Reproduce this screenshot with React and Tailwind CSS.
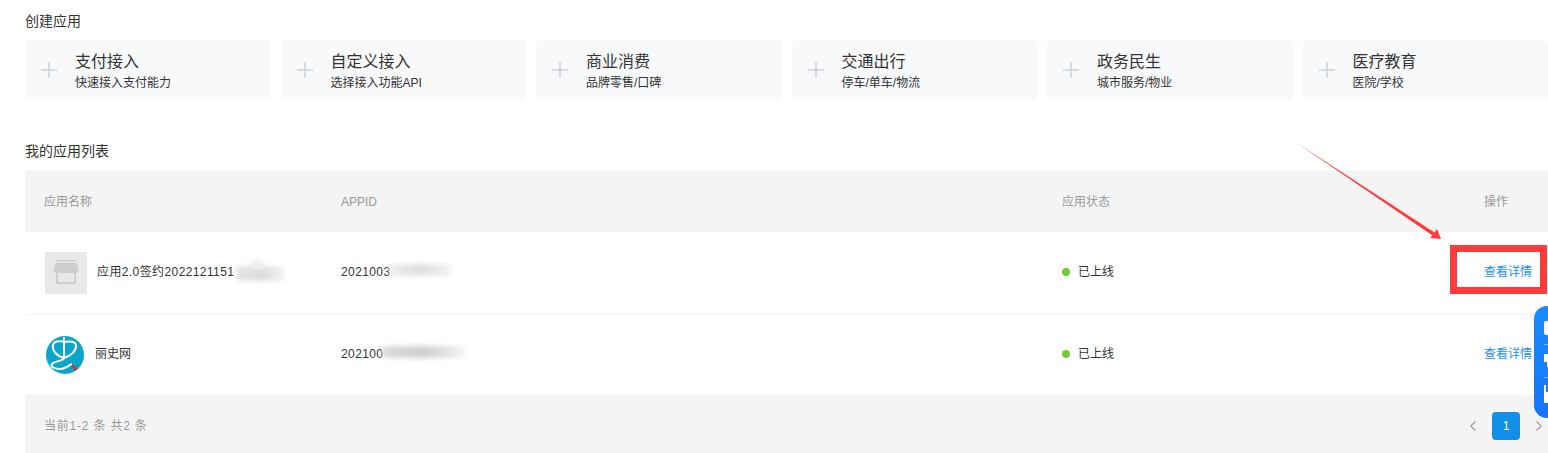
const cards = [
  { title: "支付接入", desc: "快速接入支付能力" },
  { title: "自定义接入", desc: "选择接入功能API" },
  { title: "商业消费", desc: "品牌零售/口碑" },
  { title: "交通出行", desc: "停车/单车/物流" },
  { title: "政务民生", desc: "城市服务/物业" },
  { title: "医疗教育", desc: "医院/学校" },
];

const StoreIcon = () => (
  <svg width="42" height="42" viewBox="0 0 42 42">
    <rect x="11" y="8" width="20" height="1.5" fill="#cdcdcd" />
    <path d="M11 11h20l2 4v4a2 2 0 0 1-2 2H11a2 2 0 0 1-2-2v-4z" fill="#cdcdcd" />
    <path d="M12 21v10h18V21" fill="none" stroke="#cdcdcd" strokeWidth="2" />
  </svg>
);

const LogoIcon = () => (
  <svg width="38" height="38" viewBox="0 0 38 38">
    <circle cx="19" cy="19" r="19" fill="#0aa5cb" />
    <path d="M18 22C10 20 6 14 7 9 8 5 14 5 18.5 6 24 5 30 5 30 10 30 15 25 20 18 22" fill="none" stroke="#fff" strokeWidth="2" />
    <path d="M18 1V22C18 25 8 25 6 28 4 31 9 33 14 33 19 33 23 29 26 28" fill="none" stroke="#fff" strokeWidth="2" />
    <path d="M26 28L32 33 29 34.5 25.5 30z" fill="#e0301e" />
  </svg>
);

const Smudge = ({ className }) => (
  <span className={`absolute rounded-sm blur-[2px] ${className}`} />
);

const Row = ({ icon, name, nameClass, appid, smudge, border }) => (
  <div className={`grid grid-cols-[297px_721px_422px_1fr] items-center pl-[19px] pr-[15px] ${border}`}>
    <div className="flex items-center">
      {icon}
      <span className={`pb-[2px] text-[12px] text-[#333] whitespace-nowrap ${nameClass}`}>{name}</span>
    </div>
    <div className="relative pb-[2px] text-[12px] text-[#333] tracking-[0.4px]">
      {appid}
      {smudge}
    </div>
    <div className="flex items-center gap-[8px] pb-[2px] text-[12px] text-[#333]">
      <span className="w-2 h-2 rounded-full bg-[#76c940]" />
      已上线
    </div>
    <a className="pb-[2px] text-[12px] text-[#1890ff]">查看详情</a>
  </div>
);

export default function App() {
  return (
    <div className="relative w-[1548px] h-[453px] overflow-hidden bg-white pl-[25px] font-['Liberation_Sans','Noto_Sans_CJK_SC',sans-serif]">
      <h2 className="pt-[12px] h-[40px] text-[14px] leading-[18px] font-normal text-[#333]">创建应用</h2>

      <div className="grid grid-cols-[repeat(6,245.5px)] gap-x-[10px] w-[1523px]">
        {cards.map((card) => (
          <div key={card.title} className="flex items-center h-[60px] rounded bg-[#f8f9fb] pl-[15px]">
            <svg width="18" height="18" viewBox="0 0 18 18" className="shrink-0 mr-[17px]">
              <path d="M9 1v16M1 9h16" stroke="#c6d1df" strokeWidth="1.5" />
            </svg>
            <div className="flex flex-col pt-[3px]">
              <span className="text-[16px] leading-[20px] text-[#333]">{card.title}</span>
              <span className="mt-[2px] text-[12px] leading-[18px] text-[#333]">{card.desc}</span>
            </div>
          </div>
        ))}
      </div>

      <h2 className="mt-[41px] h-[30px] text-[14px] leading-[20px] font-normal text-[#333]">我的应用列表</h2>

      <div className="w-[1523px]">
        <div className="grid grid-cols-[297px_721px_422px_1fr] items-center h-[61px] pl-[19px] pr-[15px] bg-[#f4f4f4] text-[12px] text-[#999]">
          <span>应用名称</span>
          <span>APPID</span>
          <span>应用状态</span>
          <span>操作</span>
        </div>

        <Row
          border="h-[83px] border-b border-[#f2f2f2]"
          icon={
            <div className="ml-[1px] w-[42px] h-[42px] bg-[#e8e8e8]">
              <StoreIcon />
            </div>
          }
          nameClass="ml-[10px] tracking-[0.4px]"
          name="应用2.0签约2022121151"
          appid="2021003"
          smudge={<Smudge className="left-[48px] top-[1px] w-[62px] h-[12px] bg-gradient-to-r from-[#efefef] via-[#e0e0e0] to-[#f2f2f2]" />}
        />
        <Row
          border="h-[80px]"
          icon={
            <div className="ml-[2px]">
              <LogoIcon />
            </div>
          }
          nameClass="ml-[11px]"
          name="丽史网"
          appid="202100"
          smudge={<Smudge className="left-[41px] top-[1px] w-[82px] h-[12px] bg-gradient-to-r from-[#dcdcdc] via-[#cfcfcf] to-[#f3f3f3]" />}
        />

        <div className="flex items-center justify-between h-[58px] pt-[4px] pl-[19px] pr-[6px] bg-[#f4f4f4] text-[12px] text-[#999]">
          <span className="tracking-[0.8px]">当前1-2 条 共2 条</span>
          <div className="flex items-center gap-[16px]">
            <svg width="6" height="10" viewBox="0 0 6 10">
              <path d="M5.5 0.5L0.8 5l4.7 4.5" fill="none" stroke="#999" strokeWidth="1.1" />
            </svg>
            <span className="flex items-center justify-center w-[28px] h-[28px] rounded bg-[#108ee9] text-white text-[12px]">1</span>
            <svg width="6" height="10" viewBox="0 0 6 10">
              <path d="M0.5 0.5L5.2 5 0.5 9.5" fill="none" stroke="#999" strokeWidth="1.1" />
            </svg>
          </div>
        </div>
      </div>

      {/* screenshot annotations */}
      <Smudge className="left-[236px] top-[266px] w-[48px] h-[15px] bg-gradient-to-r from-[#e6e6e6] via-[#dcdcdc] to-[#f2f2f2]" />
      <Smudge className="left-[252px] top-[260px] w-[12px] h-[10px] bg-[#eeeeee]" />
      <div className="absolute left-[1450px] top-[245px] w-[97px] h-[49px] border-[7px] border-[#ff3b3b]" />
      <svg className="absolute left-[1290px] top-[138px]" width="160" height="110" viewBox="0 0 160 110">
        <path d="M7 5L144.5 94.5 147 91 151 101 140 100 142.5 97.5z" fill="#ff3b3b" />
      </svg>

      {/* floating help widget */}
      <div className="absolute left-[1534px] top-[306px] w-[30px] h-[112px] rounded-l-[13px] bg-gradient-to-b from-[#1a8cff] to-[#1673ff] flex flex-col pt-[15px] pl-[10px]">
        <span className="w-[6px] h-[14px] bg-white rounded-l-[2px]" />
        <span className="mt-[9px] w-[6px] h-px bg-[#7db8ff]" />
        <svg width="6" height="15" viewBox="0 0 6 15" className="mt-[8px]">
          <path d="M0 1h6v13H3V9H0z" fill="#fff" />
        </svg>
        <span className="mt-[9px] w-[6px] h-px bg-[#7db8ff]" />
        <svg width="6" height="18" viewBox="0 0 6 18" className="mt-[7px]">
          <path d="M0 0h2v7h4v11H0z" fill="#fff" />
        </svg>
      </div>
    </div>
  );
}
